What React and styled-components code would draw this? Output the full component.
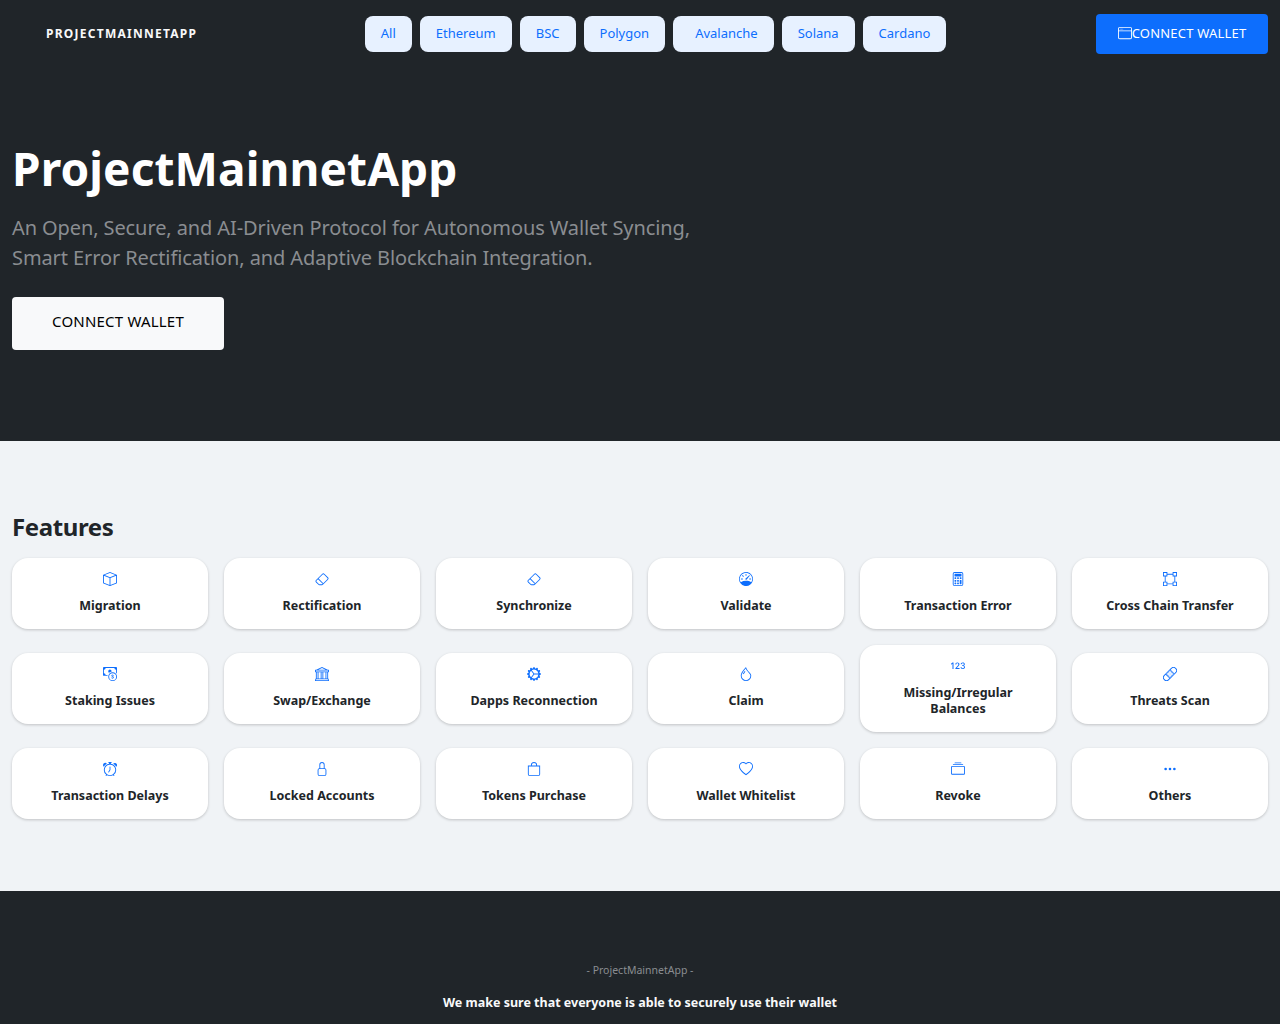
import React from 'react';
import styled, { createGlobalStyle } from 'styled-components';
import {
  BsBox, BsEraser, BsSpeedometer, BsCalculator, BsBoundingBox, BsCashCoin, BsBank,
  BsGearWideConnected, BsDroplet, Bs123, BsBandaid, BsAlarm, BsLock, BsBag, BsHeart,
  BsCollection, BsThreeDots, BsWindow,
} from 'react-icons/bs';

const GlobalStyle = createGlobalStyle`
  html, body {
    margin: 0;
    padding: 0;
    background: #202529;
    font-family: "Noto Sans", sans-serif;
  }
  * { box-sizing: border-box; }
`;

const Navbar = styled.nav`
  height: 67px;
  padding: 0 12px;
  display: flex;
  align-items: center;
  justify-content: space-between;
  background: #202529;
`;

const Brand = styled.div`
  padding: 0 18px 0 34px;
  font-size: 12px;
  font-weight: 700;
  letter-spacing: 1.25px;
  color: #f8f9fa;
  text-transform: uppercase;
`;

const Chains = styled.div`
  display: flex;
  gap: 8px;
`;

const Chain = styled.button`
  height: 36px;
  padding: 0 16px 2px ${(p) => (p.$wide ? '22px' : '16px')};
  border: none;
  border-radius: 8px;
  background: #e7f1ff;
  color: #0d6efd;
  font: 400 13px "Noto Sans", sans-serif;
`;

const NavConnect = styled.button`
  width: 172px;
  height: 40px;
  padding: 0 0 2px;
  display: flex;
  align-items: center;
  justify-content: center;
  border: none;
  border-radius: 4px;
  background: #0d6efd;
  color: #fff;
  font: 400 13px "Noto Sans", sans-serif;
  letter-spacing: 0.2px;
`;

const Hero = styled.section`
  height: 374px;
  padding: 72px 12px 0;
  background: #202529;
`;

const Title = styled.h1`
  margin: 0 0 16px;
  font-size: 46px;
  line-height: 58px;
  font-weight: 700;
  letter-spacing: 0.1px;
  color: #fff;
`;

const Lead = styled.p`
  margin: 0 0 24px;
  font-size: 20px;
  line-height: 30px;
  letter-spacing: -0.1px;
  color: #8a8d91;
`;

const HeroConnect = styled.button`
  width: 212px;
  height: 53px;
  padding: 0 0 5px;
  border: none;
  border-radius: 4px;
  background: #f8f9fa;
  color: #000;
  font: 400 15px "Noto Sans", sans-serif;
  letter-spacing: 0.2px;
`;

const Features = styled.section`
  height: 450px;
  padding: 70px 12px 0;
  background: #f0f3f6;
`;

const Heading = styled.h2`
  margin: 0 0 16px;
  font-size: 24px;
  line-height: 31px;
  font-weight: 700;
  letter-spacing: -0.4px;
  color: #212529;
`;

const Grid = styled.div`
  display: grid;
  grid-template-columns: repeat(6, 196px);
  grid-auto-rows: 71px;
  column-gap: 16px;
  row-gap: 24px;
  align-items: center;
`;

const Card = styled.div`
  padding: 14px 32px 15.5px;
  display: flex;
  flex-direction: column;
  align-items: center;
  border-radius: 16px;
  background: #fff;
  box-shadow: 0 1px 3px rgba(0, 0, 0, 0.2);
  color: #0d6efd;
`;

const CardIcon = styled.span`
  display: flex;
  height: 16px;
  font-size: 14px;
`;

const CardLabel = styled.div`
  margin-top: 10px;
  font-size: 12.5px;
  line-height: 15.5px;
  font-weight: 700;
  text-align: center;
  color: #212529;
`;

const Footer = styled.footer`
  padding: 72px 12px 40px;
  background: #202529;
  text-align: center;
`;

const Tagline = styled.div`
  font-size: 10.5px;
  line-height: 14px;
  color: #8a8d91;
`;

const Promise = styled.div`
  margin-top: 17px;
  font-size: 12.5px;
  line-height: 18px;
  font-weight: 700;
  color: #f8f9fa;
`;

const chains = ['All', 'Ethereum', 'BSC', 'Polygon', 'Avalanche', 'Solana', 'Cardano'];

const features = [
  ['Migration', BsBox],
  ['Rectification', BsEraser],
  ['Synchronize', BsEraser],
  ['Validate', BsSpeedometer],
  ['Transaction Error', BsCalculator],
  ['Cross Chain Transfer', BsBoundingBox],
  ['Staking Issues', BsCashCoin],
  ['Swap/Exchange', BsBank],
  ['Dapps Reconnection', BsGearWideConnected],
  ['Claim', BsDroplet],
  ['Missing/Irregular Balances', Bs123],
  ['Threats Scan', BsBandaid],
  ['Transaction Delays', BsAlarm],
  ['Locked Accounts', BsLock],
  ['Tokens Purchase', BsBag],
  ['Wallet Whitelist', BsHeart],
  ['Revoke', BsCollection],
  ['Others', BsThreeDots],
];

export default function App() {
  return (
    <>
      <GlobalStyle />
      <Navbar>
        <Brand>ProjectMainnetApp</Brand>
        <Chains>
          {chains.map((name) => (
            <Chain key={name} $wide={name === 'Avalanche'}>{name}</Chain>
          ))}
        </Chains>
        <NavConnect><BsWindow size={14} />CONNECT WALLET</NavConnect>
      </Navbar>
      <Hero>
        <Title>ProjectMainnetApp</Title>
        <Lead>
          An Open, Secure, and AI-Driven Protocol for Autonomous Wallet Syncing,
          <br />
          Smart Error Rectification, and Adaptive Blockchain Integration.
        </Lead>
        <HeroConnect>CONNECT WALLET</HeroConnect>
      </Hero>
      <Features>
        <Heading>Features</Heading>
        <Grid>
          {features.map(([label, Icon]) => (
            <Card key={label}>
              <CardIcon><Icon /></CardIcon>
              <CardLabel>{label}</CardLabel>
            </Card>
          ))}
        </Grid>
      </Features>
      <Footer>
        <Tagline>- ProjectMainnetApp -</Tagline>
        <Promise>We make sure that everyone is able to securely use their wallet</Promise>
      </Footer>
    </>
  );
}
